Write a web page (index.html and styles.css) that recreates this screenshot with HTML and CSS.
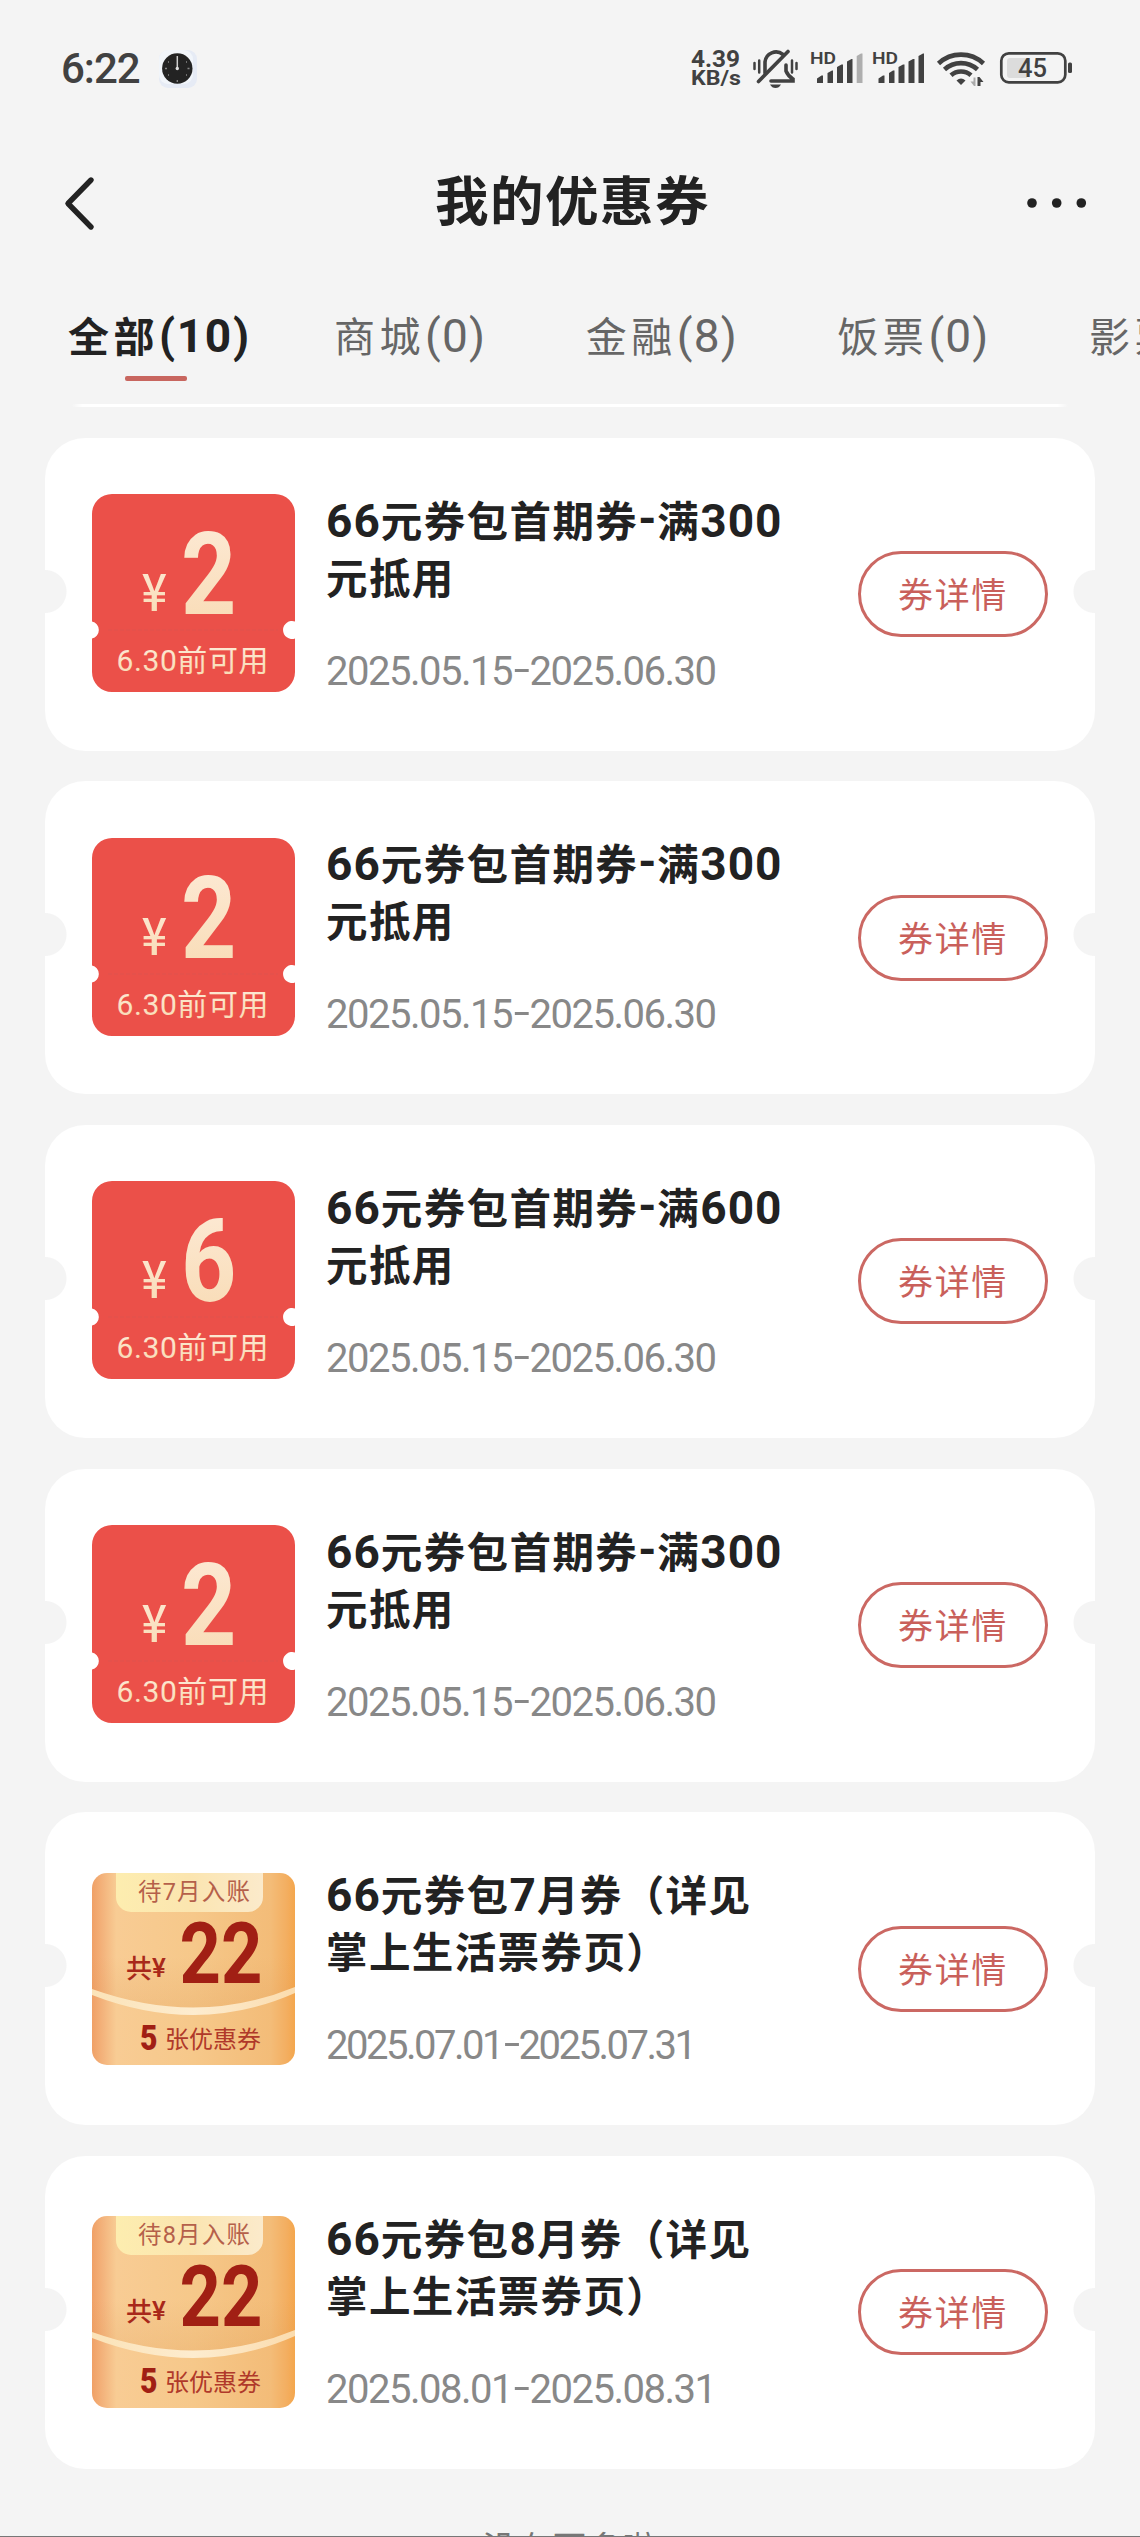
FILE: index.html
```html
<!DOCTYPE html>
<html lang="zh-CN">
<head>
<meta charset="utf-8">
<title>我的优惠券</title>
<link rel="stylesheet" href="styles.css">
</head>
<body>
<svg class="defs" width="0" height="0" aria-hidden="true">
  <defs>
    <linearGradient id="cream" x1="0" y1="0" x2="0" y2="1"><stop offset="0" stop-color="#fdebd8"/><stop offset="1" stop-color="#f8dab2"/></linearGradient>
    <linearGradient id="gold" x1="0" y1="0" x2="1" y2="0"><stop offset="0" stop-color="#f0a066"/><stop offset=".05" stop-color="#f3b27b"/><stop offset=".12" stop-color="#f8cc94"/><stop offset=".5" stop-color="#f6c88a"/><stop offset=".88" stop-color="#f3bc78"/><stop offset=".96" stop-color="#f3ae60"/><stop offset="1" stop-color="#f4a64c"/></linearGradient>
    <linearGradient id="tab" x1="0" y1="0" x2="1" y2="0"><stop offset="0" stop-color="#fdedaf"/><stop offset=".5" stop-color="#fbe5b0"/><stop offset="1" stop-color="#fbeacb"/></linearGradient>
    <linearGradient id="ribbon" x1="0" y1="0" x2="1" y2="0"><stop offset="0" stop-color="#fbe3b8"/><stop offset=".5" stop-color="#fdeccf"/><stop offset="1" stop-color="#fbdcae"/></linearGradient>
    <linearGradient id="shade" x1="0" y1="0" x2="0" y2="1"><stop offset=".6" stop-color="#d9914a" stop-opacity="0"/><stop offset="1" stop-color="#d9914a" stop-opacity=".2"/></linearGradient>
    <clipPath id="goldclip"><rect width="203" height="192" rx="15"/></clipPath>
    <symbol id="redbg" viewBox="0 0 203 198">
      <path fill="#eb5049" d="M20 0H183A20 20 0 0 1 203 20V127.500A9 9 0 1 0 203 144.500V178A20 20 0 0 1 183 198H20A20 20 0 0 1 0 178V144.500A8.700 8.700 0 0 0 0 127.500V20A20 20 0 0 1 20 0Z"/>
      <path d="M16 136H186" stroke="#e3524c" stroke-width="1.500" stroke-dasharray="4 2"/>
    </symbol>
    <symbol id="goldbg" viewBox="0 0 203 192">
      <g clip-path="url(#goldclip)">
        <rect width="203" height="192" fill="url(#gold)"/>
        <path d="M0 0H203V118Q104 160 0 119Z" fill="url(#shade)"/>
        <path d="M0 116Q106 154 203 114V120Q106 163 0 122Z" fill="url(#ribbon)"/>
        <path d="M24 0H171V24A15 15 0 0 1 156 39H39A15 15 0 0 1 24 24Z" fill="url(#tab)"/>
      </g>
    </symbol>
  </defs>
</svg>
<div class="screen">
  <div class="status">
    <span class="time">6:22</span>
    <svg class="clock" width="38" height="38" viewBox="0 0 38 38">
      <rect width="38" height="38" rx="9" fill="#e6ebf5"/><rect width="34" height="34" rx="9" fill="#f1f5fa"/>
      <circle cx="18.300" cy="18.500" r="15.200" fill="#232323"/>
      <path d="M18.300 6V18" stroke="#ccc" stroke-width="1.500"/><circle cx="18.300" cy="18.500" r="1.700" fill="#ddd"/>
      <path d="M6 18.500h2M28.500 18.500h2M18.300 30v2M9 25l1 0M27 12l1 0M27 25l1 0M9 12l1 0" stroke="#888" stroke-width="1.300"/>
    </svg>
    <svg class="signals" width="390" height="50" viewBox="690 45 390 50" fill="#414141">
      <text class="net" x="691" y="67" font-size="23" textLength="49" lengthAdjust="spacingAndGlyphs">4.39</text>
      <text class="net" x="691" y="85" font-size="21" textLength="50" lengthAdjust="spacingAndGlyphs">KB/s</text>
      <g fill="none" stroke="#414141" stroke-linecap="round">
        <path d="M754.500 63v6M796.500 63v6" stroke-width="2.500"/><path d="M759.200 60.500v12M792 60.500v12" stroke-width="2.500"/>
        <path d="M765 73V62A11 11 0 0 1 783 54.500M786 65v6Q788 76 793 79V81H771" stroke-width="3.600"/>
        <path d="M758.500 81.500 788 51.500" stroke-width="3.600"/>
      </g>
      <path d="M770 84.500H781Q779 88 775.500 88T770 84.500Z"/>
      <g class="hd"><text x="810" y="63.700" textLength="26" lengthAdjust="spacingAndGlyphs">HD</text><text x="872" y="63.700" textLength="26" lengthAdjust="spacingAndGlyphs">HD</text></g>
      <path d="M817 78.500 821.500 75.500H823V83H817ZM827.500 73 832 70.500H833V83H827.500ZM837 67 841.500 64.500H843V83H837ZM847 61.500 851.500 59H852.500V83H847Z"/>
      <path d="M856.700 56 861 53.500H862.500V83H856.700Z" fill="#aeaeae"/>
      <path d="M878.500 78.500 883 75.500H884.500V83H878.500ZM889 73 893 70.500H894.500V83H889ZM898.500 67 903 64.500H904.500V83H898.500ZM908.500 61.500 913 59H914.500V83H908.500ZM918.500 56 923 53.500H924V83H918.500Z"/>
      <g fill="none" stroke="#414141" stroke-width="4.600"><path d="M938.500 63.500A33 33 0 0 1 983.500 63.500"/><path d="M944.500 69.500A24.500 24.500 0 0 1 977.500 69.500"/><path d="M951 75.300A15 15 0 0 1 971 75.300"/></g>
      <path d="M956.500 80.500Q961 76.500 965.500 80.500L961 85Z"/>
      <path d="M975.500 77.500V86H974L970.500 81.500H973.500V77.500Z" fill="#aaa"/><path d="M977.500 86V77H979.500L983.500 82H980.500V86Z"/>
      <rect x="1001.300" y="53.300" width="64" height="29" rx="7.500" fill="none" stroke="#414141" stroke-width="2.700"/>
      <path d="M1010 58H1027V78H1010Q1007 78 1007 75V61Q1007 58 1010 58Z" fill="#dcdcdc"/>
      <rect x="1068" y="62.500" width="4" height="10.500" rx="1.500"/>
      <text class="pct" x="1018" y="77" textLength="29" lengthAdjust="spacingAndGlyphs">45</text>
    </svg>
  </div>

  <header class="nav">
    <svg width="40" height="60" viewBox="0 0 40 60"><path d="M31 7 8 30.500 31 54" fill="none" stroke="#222" stroke-width="5.400" stroke-linecap="round" stroke-linejoin="round"/></svg>
    <h1>我的优惠券</h1>
    <svg width="60" height="20" viewBox="0 0 60 20" fill="#222"><circle cx="5" cy="10" r="4.800"/><circle cx="29.700" cy="10" r="4.800"/><circle cx="54.300" cy="10" r="4.800"/></svg>
  </header>

  <nav class="tabs">
    <div class="tab on">全部<b>(10)</b></div>
    <div class="tab">商城<b>(0)</b></div>
    <div class="tab">金融<b>(8)</b></div>
    <div class="tab">饭票<b>(0)</b></div>
    <div class="tab">影票<b>(0)</b></div>
  </nav>
  <div class="rule"></div>

  <main class="list">
    <article class="card">
      <svg class="thumb red" viewBox="0 0 203 198"><use href="#redbg"/><text class="yen" transform="translate(49.500 117) scale(1 1.150)">¥</text><text class="big" transform="translate(89 120) scale(.84 1)">2</text><text class="cap" x="24.500" y="176.500" textLength="152">6.30前可用</text></svg>
      <div class="info"><h2><b>66</b>元券包首期券<b class="dash">-</b>满<b>300</b><br>元抵用</h2><p>2025.05.15<i>-</i>2025.06.30</p></div>
      <button>券详情</button>
    </article>
    <article class="card">
      <svg class="thumb red" viewBox="0 0 203 198"><use href="#redbg"/><text class="yen" transform="translate(49.500 117) scale(1 1.150)">¥</text><text class="big" transform="translate(89 120) scale(.84 1)">2</text><text class="cap" x="24.500" y="176.500" textLength="152">6.30前可用</text></svg>
      <div class="info"><h2><b>66</b>元券包首期券<b class="dash">-</b>满<b>300</b><br>元抵用</h2><p>2025.05.15<i>-</i>2025.06.30</p></div>
      <button>券详情</button>
    </article>
    <article class="card">
      <svg class="thumb red" viewBox="0 0 203 198"><use href="#redbg"/><text class="yen" transform="translate(49.500 117) scale(1 1.150)">¥</text><text class="big" transform="translate(89 120) scale(.84 1)">6</text><text class="cap" x="24.500" y="176.500" textLength="152">6.30前可用</text></svg>
      <div class="info"><h2><b>66</b>元券包首期券<b class="dash">-</b>满<b>600</b><br>元抵用</h2><p>2025.05.15<i>-</i>2025.06.30</p></div>
      <button>券详情</button>
    </article>
    <article class="card">
      <svg class="thumb red" viewBox="0 0 203 198"><use href="#redbg"/><text class="yen" transform="translate(49.500 117) scale(1 1.150)">¥</text><text class="big" transform="translate(89 120) scale(.84 1)">2</text><text class="cap" x="24.500" y="176.500" textLength="152">6.30前可用</text></svg>
      <div class="info"><h2><b>66</b>元券包首期券<b class="dash">-</b>满<b>300</b><br>元抵用</h2><p>2025.05.15<i>-</i>2025.06.30</p></div>
      <button>券详情</button>
    </article>
    <article class="card">
      <svg class="thumb gold" viewBox="0 0 203 192"><use href="#goldbg"/><text class="due" x="46" y="27" textLength="112">待7月入账</text><text class="sum" x="34" y="105">共</text><text class="sum" x="60" y="103.500">¥</text><text class="total" transform="translate(87.500 110) scale(.85 1)">22</text><text class="five" transform="translate(48 177) scale(.84 1)">5</text><text class="cnt" x="73" y="175">张优惠券</text></svg>
      <div class="info"><h2><b>66</b>元券包<b>7</b>月券（详见<br>掌上生活票券页）</h2><p class="narrow">2025.07.01<i>-</i>2025.07.31</p></div>
      <button>券详情</button>
    </article>
    <article class="card">
      <svg class="thumb gold" viewBox="0 0 203 192"><use href="#goldbg"/><text class="due" x="46" y="27" textLength="112">待8月入账</text><text class="sum" x="34" y="105">共</text><text class="sum" x="60" y="103.500">¥</text><text class="total" transform="translate(87.500 110) scale(.85 1)">22</text><text class="five" transform="translate(48 177) scale(.84 1)">5</text><text class="cnt" x="73" y="175">张优惠券</text></svg>
      <div class="info"><h2><b>66</b>元券包<b>8</b>月券（详见<br>掌上生活票券页）</h2><p>2025.08.01<i>-</i>2025.08.31</p></div>
      <button>券详情</button>
    </article>
  </main>
  <footer class="end">没有更多啦</footer>
</div>
</body>
</html>
```
FILE: styles.css
```css
* { box-sizing: border-box; }
body {
  margin: 0;
  background: #f4f4f4;
  color: #222;
  font-family: Roboto, "Noto Sans CJK SC", sans-serif;
}
.defs { display: block; }
svg { flex: none; }
.screen {
  width: 1140px;
  height: 2537px;
  overflow: hidden;
  display: flex;
  flex-direction: column;
  border-bottom: 1px solid #777;
}

/* status bar */
.status {
  height: 140px;
  flex: none;
  padding: 45px 60px 0 61px;
  display: flex;
  align-items: flex-start;
}
.time {
  width: 98px;
  font-size: 42px;
  line-height: 48px;
  font-weight: 500;
  letter-spacing: -1px;
  color: #414141;
}
.clock { margin-top: 5px; }
.signals { margin-left: auto; font-family: Roboto, sans-serif; }
.net { font-weight: 700; }
.hd { font-size: 16.5px; font-weight: 600; }
.pct { font-size: 25px; font-weight: 500; }

/* title bar */
.nav {
  height: 125px;
  flex: none;
  padding: 0 53px 0 60px;
  display: flex;
  align-items: center;
  justify-content: space-between;
}
.nav h1 {
  margin: 0;
  padding: 0 0 9px 18px;
  font: 700 53.500px/60px "Noto Sans CJK SC", sans-serif;
  letter-spacing: 1.500px;
}

/* category tabs */
.tabs {
  height: 139px;
  flex: none;
  padding: 43px 0 0 68px;
  display: grid;
  grid-template-columns: 266px 251.700px 251.700px 251.700px 251.700px;
  overflow: hidden;
}
.tab {
  font-size: 41px;
  line-height: 60px;
  letter-spacing: 4.500px;
  color: #666;
  white-space: nowrap;
  font-weight: 400;
}
.tab b { font-size: 46px; line-height: 1; font-weight: 400; letter-spacing: 1.200px; }
.tab.on, .tab.on b { color: #222; font-weight: 700; }
.tab.on b { letter-spacing: 1.700px; }
.tab.on::after {
  content: "";
  display: block;
  width: 62px;
  height: 5px;
  margin: 8px 0 0 57px;
  border-radius: 2px;
  background: #c8665f;
}
.rule {
  height: 3px;
  flex: none;
  margin: 0 72px;
  background: linear-gradient(90deg, #fff0, #fff 1%, #fff 99%, #fff0);
}

/* coupon list */
.list {
  flex: none;
  padding: 30.500px 45.400px 0;
  display: grid;
  gap: 30.700px;
}
.card {
  height: 313px;
  padding: 0 46.600px;
  display: flex;
  align-items: center;
  border-radius: 40px;
  background:
    radial-gradient(circle at 0 153.500px, #f4f4f4 21px, #f4f4f400 22px),
    radial-gradient(circle at 100% 153.500px, #f4f4f4 21px, #f4f4f400 22px),
    #fff;
}
.thumb { width: 203px; }
.thumb.red { height: 198px; margin-top: -2px; }
.thumb.gold { height: 192px; }
.info { flex: 1; padding-left: 31px; align-self: flex-start; padding-top: 53px; }
.info h2 {
  margin: 0;
  font-size: 41.500px;
  line-height: 57px;
  font-weight: 700;
  letter-spacing: 1.400px;
  white-space: nowrap;
  font-family: "Noto Sans CJK SC", sans-serif;
}
.info h2 b { font-family: Roboto, sans-serif; font-size: 46px; line-height: 1; font-weight: 700; letter-spacing: 1px; }
.info h2 .dash { display: inline-block; transform: translateY(-2px); }
.info p {
  margin: 43px 0 0;
  font-size: 40px;
  line-height: 48px;
  letter-spacing: -1.500px;
  color: #888;
  white-space: nowrap;
}
.info p i { display: inline-block; font-style: normal; transform: translateY(-2px) scaleX(1.450); margin: 0 4px; }
.info p.narrow { letter-spacing: -2.500px; }
.card button {
  width: 190px;
  height: 86px;
  flex: none;
  padding: 0 0 3px;
  border: 3px solid #cb6863;
  border-radius: 43px;
  background: none;
  color: #c9605b;
  font: 400 35px/1 "Noto Sans CJK SC", sans-serif;
  letter-spacing: 1.700px;
}

/* thumbnails */
.thumb text { font-family: Roboto, "Noto Sans CJK SC", sans-serif; }
.yen, .big, .cap { fill: url(#cream); }
.thumb .yen { font-size: 45px; font-family: "Noto Sans CJK SC", sans-serif; font-weight: 500; }
.big { font-size: 115px; font-weight: 700; }
.cap { font-size: 30px; }
.due { font-size: 23.500px; fill: #b5604a; }
.sum { font-size: 26px; font-weight: 500; fill: #a8281a; }
.total { font-size: 85px; font-weight: 700; fill: #a11f14; }
.five { font-size: 36px; font-weight: 900; fill: #a11f14; }
.cnt { font-size: 24px; fill: #b0392a; }

.end {
  flex: none;
  margin-top: 53px;
  text-align: center;
  font: 400 34px/50px "Noto Sans CJK SC", sans-serif;
  letter-spacing: 1px;
  color: #777;
}
```
